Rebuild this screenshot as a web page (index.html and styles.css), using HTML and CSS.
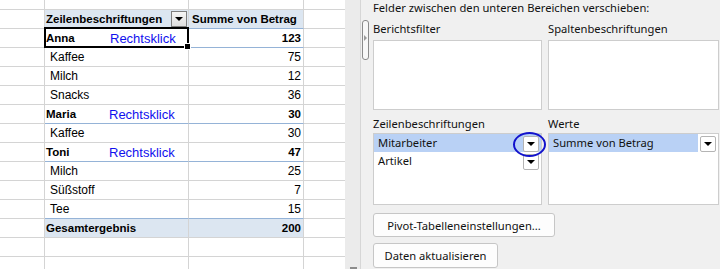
FILE: index.html
```html
<html>

<head>
  <meta name="viewport" content="width=device-width, initial-scale=1.0" />
  <title> Pivot-Tabelle </title>
  <link rel="stylesheet" href="styles.css">
</head>

<body>
  <div class="screen">
    <div class="sheet">
      <div class="row short"><div class="cell"></div><div class="cell"></div><div class="cell"></div><div class="cell"></div></div>
      <div class="row head">
        <div class="cell"></div>
        <div class="cell name bold">Zeilenbeschriftungen<span class="filter-btn"></span></div>
        <div class="cell num bold left">Summe von Betrag</div>
        <div class="cell"></div>
      </div>
      <div class="row group first">
        <div class="cell"></div>
        <div class="cell name bold selected"><span class="person">Anna</span><span class="hint">Rechtsklick</span></div>
        <div class="cell num bold">123</div>
        <div class="cell"></div>
      </div>
      <div class="row"><div class="cell"></div><div class="cell name sub">Kaffee</div><div class="cell num">75</div><div class="cell"></div></div>
      <div class="row"><div class="cell"></div><div class="cell name sub">Milch</div><div class="cell num">12</div><div class="cell"></div></div>
      <div class="row"><div class="cell"></div><div class="cell name sub">Snacks</div><div class="cell num">36</div><div class="cell"></div></div>
      <div class="row group">
        <div class="cell"></div>
        <div class="cell name bold"><span class="person">Maria</span><span class="hint">Rechtsklick</span></div>
        <div class="cell num bold">30</div>
        <div class="cell"></div>
      </div>
      <div class="row"><div class="cell"></div><div class="cell name sub">Kaffee</div><div class="cell num">30</div><div class="cell"></div></div>
      <div class="row group">
        <div class="cell"></div>
        <div class="cell name bold"><span class="person">Toni</span><span class="hint">Rechtsklick</span></div>
        <div class="cell num bold">47</div>
        <div class="cell"></div>
      </div>
      <div class="row"><div class="cell"></div><div class="cell name sub">Milch</div><div class="cell num">25</div><div class="cell"></div></div>
      <div class="row"><div class="cell"></div><div class="cell name sub">Süßstoff</div><div class="cell num">7</div><div class="cell"></div></div>
      <div class="row last-item"><div class="cell"></div><div class="cell name sub">Tee</div><div class="cell num">15</div><div class="cell"></div></div>
      <div class="row total">
        <div class="cell"></div>
        <div class="cell name bold">Gesamtergebnis</div>
        <div class="cell num bold">200</div>
        <div class="cell"></div>
      </div>
      <div class="row"><div class="cell"></div><div class="cell"></div><div class="cell"></div><div class="cell"></div></div>
      <div class="row"><div class="cell"></div><div class="cell"></div><div class="cell"></div><div class="cell"></div></div>
    </div>

    <div class="splitter"><span class="scroll-nub"></span></div>

    <div class="panel">
      <span class="collapse-handle"></span>
      <div class="panel-title">Felder zwischen den unteren Bereichen verschieben:</div>

      <div class="areas">
        <div class="area">
          <div class="area-label">Berichtsfilter</div>
          <div class="area-box"></div>
        </div>
        <div class="area">
          <div class="area-label">Spaltenbeschriftungen</div>
          <div class="area-box"></div>
        </div>
        <div class="area">
          <div class="area-label">Zeilenbeschriftungen</div>
          <div class="area-box tall">
            <div class="field active"><span class="field-name">Mitarbeiter</span><span class="drop-btn"></span></div>
            <div class="field"><span class="field-name">Artikel</span><span class="drop-btn"></span></div>
            <span class="mark"></span>
          </div>
        </div>
        <div class="area">
          <div class="area-label">Werte</div>
          <div class="area-box tall">
            <div class="field"><span class="field-name active">Summe von Betrag</span><span class="drop-btn"></span></div>
          </div>
        </div>
      </div>

      <button class="btn wide">Pivot-Tabelleneinstellungen...</button>
      <button class="btn">Daten aktualisieren</button>
    </div>
  </div>
</body>

</html>
```

FILE: styles.css
```css
body {
  margin: 0px;
}

* {
  box-sizing: border-box;
}

.screen {
  width: 720px;
  height: 269px;
  display: flex;
  overflow: hidden;
}

/* spreadsheet */

.sheet {
  width: 345px;
  background: #ffffff;
  font-family: "Liberation Sans", Arial, sans-serif;
  font-size: 12px;
  color: #000000;
}

.row {
  display: grid;
  grid-template-columns: 45px 144px 115px 41px;
  height: 19px;
}

.row.short {
  height: 10px;
}

.cell {
  border-right: 1px solid #d4d4d4;
  border-bottom: 1px solid #d4d4d4;
  display: flex;
  align-items: center;
  white-space: nowrap;
  position: relative;
}

.cell:last-child {
  border-right: 0px;
}

.bold {
  font-weight: bold;
  font-size: 11.5px;
}

.name {
  padding-left: 1px;
}

.name.sub {
  padding-left: 5px;
}

.num {
  justify-content: flex-end;
  padding-right: 2px;
}

.num.left {
  justify-content: flex-start;
  padding-left: 3px;
}

.head .cell:nth-child(2),
.head .cell:nth-child(3) {
  background: #dce6f1;
  border-bottom-color: #95b3d7;
}

.group .cell:nth-child(2),
.group .cell:nth-child(3),
.last-item .cell:nth-child(2),
.last-item .cell:nth-child(3) {
  border-bottom-color: #95b3d7;
}

.total .cell:nth-child(2),
.total .cell:nth-child(3) {
  background: #dce6f1;
}

.person {
  width: 63px;
}

.hint {
  color: #1010ee;
  font-weight: normal;
  font-size: 13px;
}

.first .hint {
  margin-left: 1px;
}

.selected::after {
  content: "";
  position: absolute;
  left: -1px;
  top: -2px;
  right: -1px;
  bottom: -1px;
  border: 2px solid #000000;
}

.selected::before {
  content: "";
  position: absolute;
  right: -3px;
  bottom: -3px;
  width: 5px;
  height: 5px;
  background: #000000;
  border: 1px solid #ffffff;
  z-index: 2;
}

.filter-btn {
  position: absolute;
  right: 1px;
  top: 1px;
  width: 16px;
  height: 16px;
  border: 1px solid #7f7f7f;
  background: linear-gradient(#f6f6f6, #dedede);
}

.filter-btn::after {
  content: "";
  position: absolute;
  left: 3px;
  top: 5px;
  border-left: 4px solid transparent;
  border-right: 4px solid transparent;
  border-top: 4px solid #000000;
}

/* splitter between sheet and task pane */

.splitter {
  width: 16px;
  background: #ebebeb;
  border-right: 1px solid #d6d6d6;
  position: relative;
}

.scroll-nub {
  position: absolute;
  left: 5px;
  bottom: 0px;
  width: 7px;
  height: 2px;
  background: #8c8c8c;
}

/* task pane */

.panel {
  flex: 1;
  background: #f0f0f0;
  padding: 0px 1px 0px 12px;
  font-family: "Noto Sans", sans-serif;
  font-size: 11.2px;
  color: #111111;
  position: relative;
}

.collapse-handle {
  position: absolute;
  left: 1px;
  top: 20px;
  width: 7px;
  height: 40px;
  border: 1px solid #8a8a8a;
  border-radius: 3px;
  background: #f7f7f7;
}

.collapse-handle::after {
  content: "";
  position: absolute;
  left: 1px;
  top: 14px;
  border-top: 3px solid transparent;
  border-bottom: 3px solid transparent;
  border-left: 3px solid #9a9a9a;
}

.panel-title {
  height: 17px;
  line-height: 16px;
}

.areas {
  display: grid;
  grid-template-columns: 169px 171px;
  column-gap: 6px;
}

.area-label {
  height: 23px;
  line-height: 16px;
  padding-top: 4px;
}

.area:nth-child(n+3) .area-label {
  height: 23px;
  padding-top: 6px;
}

.area-box {
  height: 70px;
  background: #ffffff;
  border: 1px solid #cdcdcd;
  position: relative;
}

.area-box.tall {
  height: 72px;
}

.field {
  height: 18px;
  display: flex;
  align-items: center;
  position: relative;
}

.field.active {
  background: #b9d1f5;
}

.field-name {
  padding-left: 4px;
  height: 18px;
  line-height: 18px;
  flex: 1;
}

.field-name.active {
  background: #b9d1f5;
  margin-right: 2px;
}

.drop-btn {
  width: 16px;
  height: 16px;
  margin-right: 2px;
  margin-top: 2px;
  background: #ffffff;
  border: 1px solid #b4b4b4;
  border-radius: 2px;
  position: relative;
}

.drop-btn::after {
  content: "";
  position: absolute;
  left: 3px;
  top: 5px;
  border-left: 4px solid transparent;
  border-right: 4px solid transparent;
  border-top: 4px solid #000000;
}

.mark {
  position: absolute;
  left: 139px;
  top: -2px;
  width: 33px;
  height: 25px;
  border: 2px solid #1212cc;
  border-radius: 50%;
}

.btn {
  display: block;
  height: 24px;
  margin-top: 7px;
  padding: 0px;
  text-align: center;
  white-space: nowrap;
  background: #fdfdfd;
  border: 1px solid #c6c6c6;
  border-radius: 3px;
  font-family: "Noto Sans", sans-serif;
  font-size: 11.2px;
  color: #111111;
}

.btn.wide {
  width: 182px;
  margin-top: 8px;
}

.btn + .btn {
  width: 125px;
  height: 25px;
  margin-top: 6px;
}
```
